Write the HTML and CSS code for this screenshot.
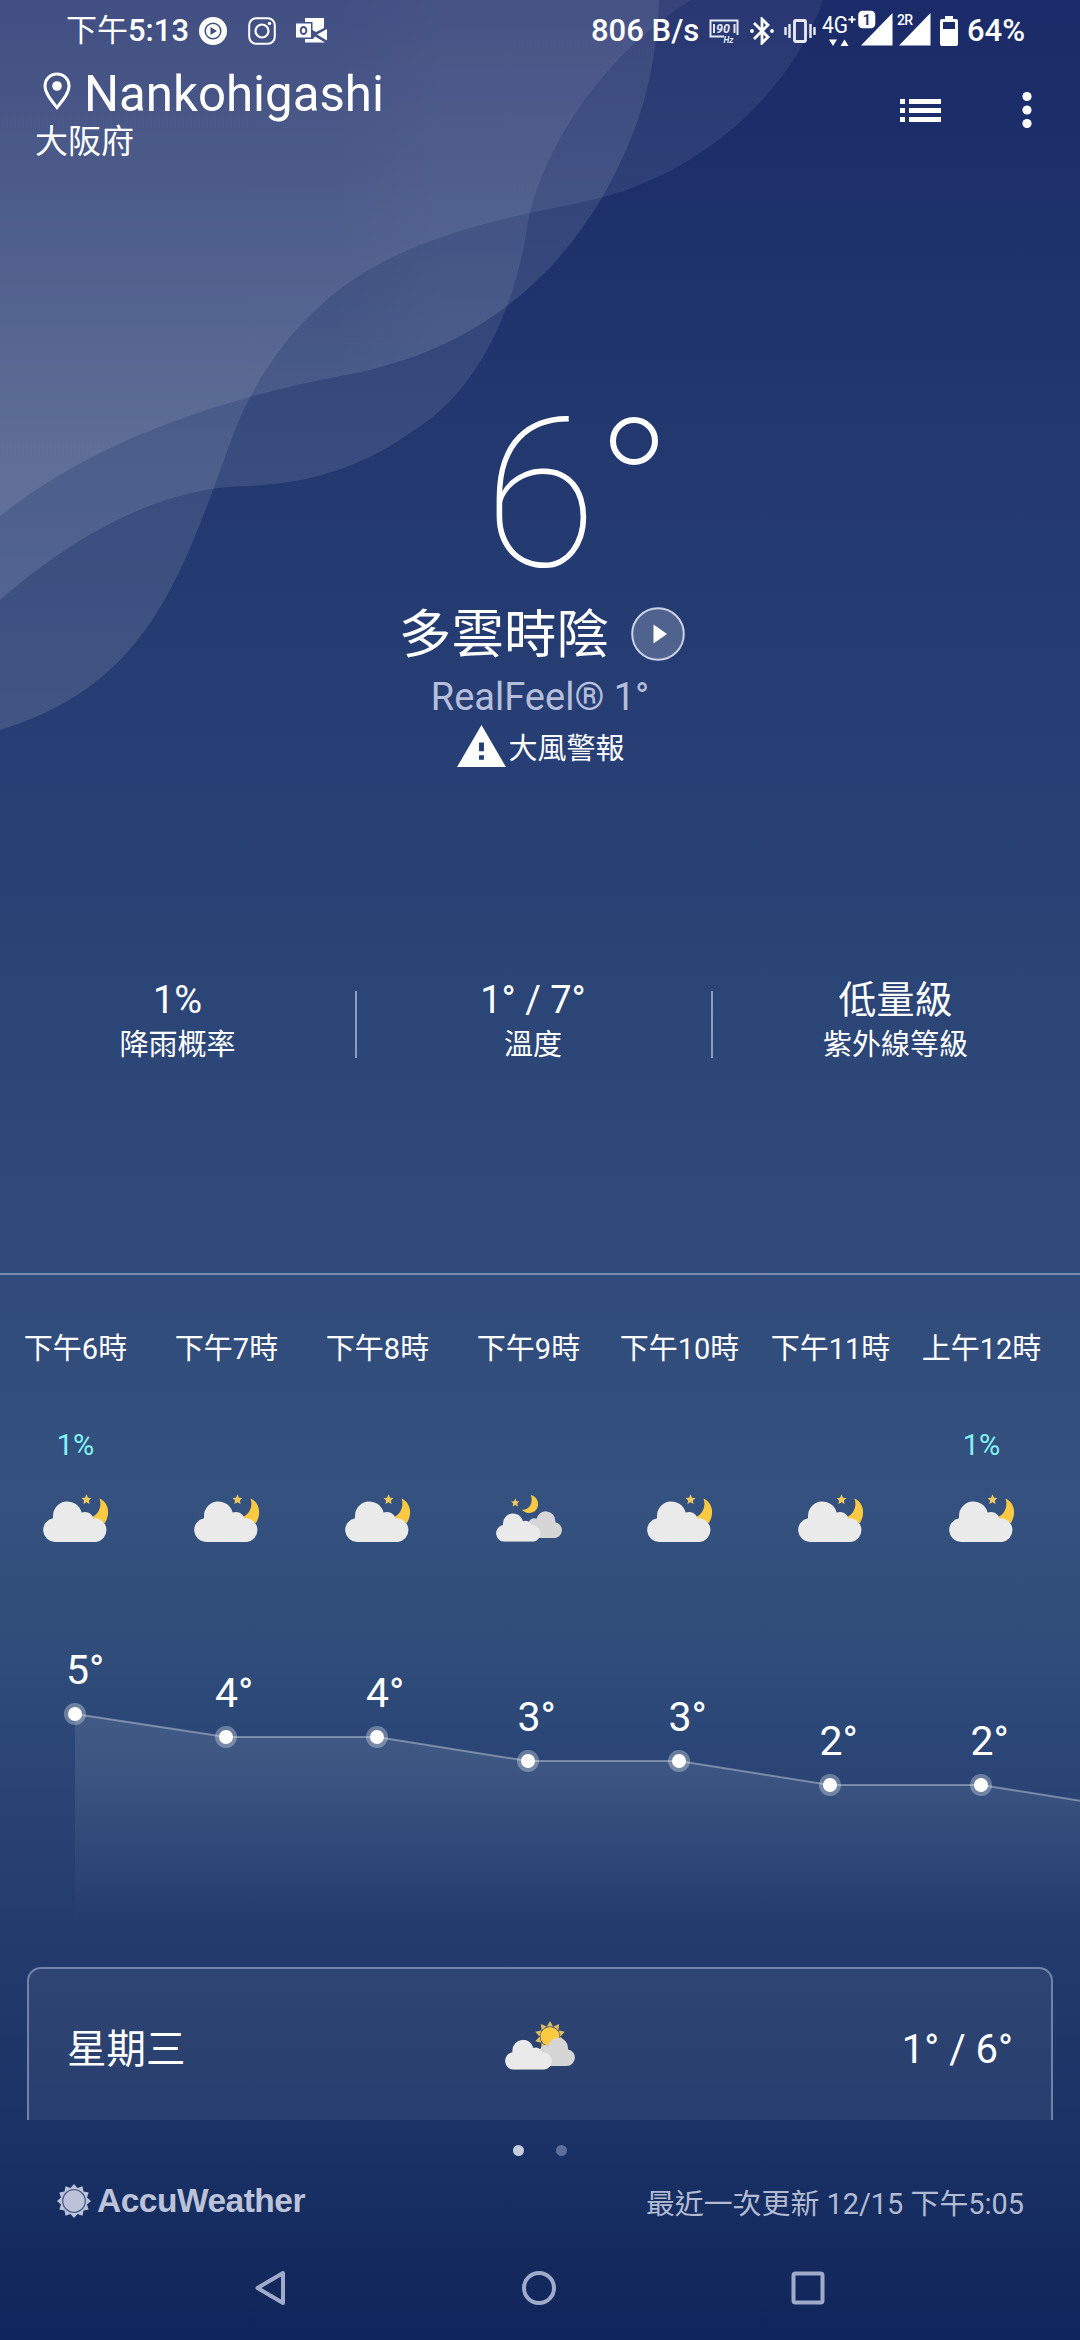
FILE: index.html
```html
<!DOCTYPE html>
<html lang="zh-Hant">
<head>
<meta charset="utf-8">
<title>AccuWeather</title>
<link rel="stylesheet" href="styles.css">
</head>
<body>
<svg class="defs" width="0" height="0" aria-hidden="true">
  <defs>
    <linearGradient id="veil" gradientUnits="userSpaceOnUse" x1="0" y1="0" x2="0" y2="720">
      <stop offset="0" stop-color="#fff" stop-opacity=".06"/>
      <stop offset=".6" stop-color="#fff" stop-opacity=".098"/>
      <stop offset="1" stop-color="#fff" stop-opacity=".12"/>
    </linearGradient>
    <linearGradient id="sheen" gradientUnits="userSpaceOnUse" x1="330" y1="0" x2="440" y2="0">
      <stop offset="0" stop-color="#fff" stop-opacity="0"/>
      <stop offset="1" stop-color="#fff" stop-opacity=".025"/>
    </linearGradient>
    <linearGradient id="area" x1="0" y1="0" x2="0" y2="1">
      <stop offset="0" stop-color="#fff" stop-opacity=".1"/>
      <stop offset=".25" stop-color="#fff" stop-opacity=".09"/>
      <stop offset="1" stop-color="#fff" stop-opacity="0"/>
    </linearGradient>
    <symbol id="cloud" viewBox="0 0 65 41">
      <path d="M12 41A12 12 0 0 1 10 17.2V15A14.5 14.5 0 0 1 38.6 11.6A9 9 0 0 1 50.5 17.2H53A12 12 0 0 1 53 41Z"/>
    </symbol>
    <symbol id="star" viewBox="0 0 10 10">
      <path d="M5 0L6.5 3.4L10 3.8L7.4 6.2L8.1 9.8L5 8L1.900 9.800L2.600 6.200L0 3.800L3.500 3.400Z"/>
    </symbol>
    <symbol id="cloudy-night" viewBox="0 0 80 60">
      <path class="gold" d="M63.5 8.500C72 12 75 23 69 33L55 27.500C62 25 66.500 17 63.500 8.500Z"/>
      <use class="gold-soft" href="#star" x="45.500" y="4" width="10" height="10.500"/>
      <use class="cloud-light" href="#cloud" x="7" y="11" width="65" height="41"/>
    </symbol>
    <symbol id="partly-night" viewBox="0 0 80 60">
      <path class="gold" d="M41.800 5C52 7.500 51.500 23 40 23Q35.500 22.800 33 19.800C41 20 44.500 12 41.800 5Z"/>
      <use class="gold-soft" href="#star" x="22" y="8" width="8.500" height="9"/>
      <use class="cloud-dark" href="#cloud" x="-73" y="21" width="43" height="27.100" transform="scale(-1 1)"/>
      <use class="cloud-light" href="#cloud" x="7" y="23" width="45.500" height="28.800"/>
    </symbol>
  </defs>
</svg>

<main class="screen">
  <svg class="waves" viewBox="0 0 1080 760" aria-hidden="true">
    <path fill="url(#veil)" d="M0 0H823C790 95 700 172 600 198C545 211 500 217 448 235C360 263 300 310 255 388C232 430 228 452 213 490C170 605 130 690 0 730Z"/>
    <path id="wave-mid" fill="url(#veil)" d="M0 0H659C656 75 640 130 603 196C545 295 460 352 351 374C210 400 90 445 0 516Z"/>
    <path fill="url(#veil)" d="M0 0H691C610 50 545 140 528 222C512 330 465 400 413 431C365 465 315 483 248 486C160 487 75 535 0 600Z"/>
    <path fill="url(#sheen)" d="M0 0H659C656 75 640 130 603 196C545 295 460 352 351 374C210 400 90 445 0 516Z"/>
  </svg>

  <header class="status">
    <span class="clock">下午<b>5:13</b></span>
    <svg class="status-media" viewBox="0 0 28 28"><circle cx="14" cy="14" r="14" fill="#fff"/><circle cx="14" cy="14" r="7.800" fill="none" stroke="#42517f" stroke-width="1.500"/><path d="M11.500 10L18 14L11.500 18Z" fill="#42517f"/></svg>
    <svg class="status-insta" viewBox="0 0 28 28" fill="none" stroke="#fff"><rect x="1.200" y="1.200" width="25.600" height="25.600" rx="7" stroke-width="2"/><circle cx="14" cy="14" r="6.500" stroke-width="2.200"/><circle cx="21.500" cy="6.500" r="1.700" fill="#fff" stroke="none"/></svg>
    <svg class="status-mail" viewBox="0 0 32 25" fill="#fff"><path fill-rule="evenodd" d="M0 5.500H15V19.500H0ZM7.500 8A3.800 4.500 0 1 0 7.500 17A3.800 4.500 0 1 0 7.500 8ZM7.500 10A1.900 2.500 0 1 1 7.500 15A1.900 2.500 0 1 1 7.500 10Z"/><path d="M9 0H28V10L20 14L16.500 12V4H9ZM31 11V22.500L21 16.500ZM9 21H17L19 18.500L29 24.500H9Z"/></svg>
    <span class="speed">806 B/s</span>
    <svg class="status-hz" viewBox="0 0 30 24"><path d="M15 17.500H1.500V1.500H28.500V16" fill="none" stroke="#e3e7f4" stroke-width="2"/><path d="M5 5V14M25.500 5V14" stroke="#e3e7f4" stroke-width="2"/><text x="7" y="14" font-size="12.500" font-style="italic" font-weight="700" fill="#e3e7f4">90</text><text x="14.500" y="23.500" font-size="8.500" font-style="italic" font-weight="700" fill="#e3e7f4">Hz</text></svg>
    <svg class="status-bt" viewBox="0 0 24 28"><path d="M4 6L18 20L12 26V2L18 8L4 22" fill="none" stroke="#fff" stroke-width="2.800"/><circle cx="2" cy="14" r="1.900" fill="#fff"/><circle cx="22" cy="14" r="1.900" fill="#fff"/></svg>
    <svg class="status-vibrate" viewBox="0 0 32 24"><rect x="10.500" y="1.500" width="11" height="21" rx="1" fill="none" stroke="#e8ebf6" stroke-width="2.800"/><path d="M1.500 8V16M5.500 5V19M26.500 5V19M30.500 8V16" stroke="#e8ebf6" stroke-width="2.400"/></svg>
    <svg class="status-signal" viewBox="0 0 112 38" fill="#fff">
      <text x="0" y="22.500" font-size="23" font-weight="400" textLength="26" lengthAdjust="spacingAndGlyphs">4G</text><path d="M30 6V13M26.500 9.500H33.500" stroke="#fff" stroke-width="1.800"/>
      <path d="M7 29.500H15L11 36ZM18.500 36L22.500 29.500L26.500 36Z"/>
      <path d="M39 35.500L70.500 3V35.500ZM77 35.500L108.500 3V35.500Z"/>
      <rect x="35.500" y="0" width="18.500" height="19" rx="5" stroke="#1c2e69" stroke-width="1.500"/>
      <text x="40.700" y="14.500" font-size="14" font-weight="700" fill="#1c2e69">1</text>
      <text x="75" y="14.500" font-size="14" font-weight="500" textLength="16">2R</text>
    </svg>
    <svg class="status-battery" viewBox="0 0 18 30"><path fill="#fff" fill-rule="evenodd" d="M5 0H13V3H16A2 2 0 0 1 18 5V28A2 2 0 0 1 16 30H2A2 2 0 0 1 0 28V5A2 2 0 0 1 2 3H5ZM3 6V13H15V6Z"/></svg>
    <span class="percent">64%</span>
  </header>

  <section class="location">
    <div class="place">
      <div class="city">
        <svg class="pin" viewBox="0 0 28 38"><path d="M14 2C7 2 2 7.300 2 14C2 21 8 28 14 35.500C20 28 26 21 26 14C26 7.300 21 2 14 2Z" fill="none" stroke="#fff" stroke-width="3"/><circle cx="14" cy="14" r="4.800" fill="#fff"/></svg>
        <h1>Nankohigashi</h1>
      </div>
      <p class="region">大阪府</p>
    </div>
    <svg class="icon-list" viewBox="0 0 41 23" fill="#fff"><path d="M0 0H5V5H0ZM9 0H41V5H9ZM0 9H5V14H0ZM9 9H41V14H9ZM0 18H5V23H0ZM9 18H41V23H9Z"/></svg>
    <svg class="icon-more" viewBox="0 0 10 36" fill="#fff"><circle cx="5" cy="4.500" r="4.600"/><circle cx="5" cy="18" r="4.600"/><circle cx="5" cy="31.500" r="4.600"/></svg>
  </section>

  <section class="now">
    <div class="temp">6<span class="degree"></span></div>
    <div class="condition"><span>多雲時陰</span>
      <svg class="play" viewBox="0 0 54 54"><circle cx="27" cy="27" r="25.800" fill="#fff" fill-opacity=".2" stroke="#ccd1e6" stroke-width="2"/><path d="M22.500 17.500V36.500L36 27Z" fill="#fff"/></svg>
    </div>
    <p class="realfeel">RealFeel® 1°</p>
    <div class="alert">
      <svg class="warning" viewBox="0 0 50 43"><path d="M25 0L50 43H0Z" fill="#fff"/><path d="M22.500 18H27.500V27H22.500ZM22.500 31H27.500V35.500H22.500Z" fill="#263e73"/></svg>
      <span>大風警報</span>
    </div>
  </section>

  <section class="stats">
    <div class="stat"><span class="value">1%</span><span class="label">降雨概率</span></div>
    <div class="stat"><span class="value">1° / 7°</span><span class="label">溫度</span></div>
    <div class="stat"><span class="value">低量級</span><span class="label">紫外線等級</span></div>
  </section>

  <section class="hourly">
    <div class="hours">
      <div class="hour"><span>下午6時</span><span class="rain">1%</span><svg><use href="#cloudy-night"/></svg></div>
      <div class="hour"><span>下午7時</span><span class="rain"></span><svg><use href="#cloudy-night"/></svg></div>
      <div class="hour"><span>下午8時</span><span class="rain"></span><svg><use href="#cloudy-night"/></svg></div>
      <div class="hour"><span>下午9時</span><span class="rain"></span><svg><use href="#partly-night"/></svg></div>
      <div class="hour"><span>下午10時</span><span class="rain"></span><svg><use href="#cloudy-night"/></svg></div>
      <div class="hour"><span>下午11時</span><span class="rain"></span><svg><use href="#cloudy-night"/></svg></div>
      <div class="hour"><span>上午12時</span><span class="rain">1%</span><svg><use href="#cloudy-night"/></svg></div>
    </div>
    <svg class="chart" viewBox="0 1550 1080 417">
      <path fill="url(#area)" d="M75 1714L226 1737H377L528 1761H679L830 1785H981L1132 1809V1925H75Z"/>
      <path fill="none" stroke="#fff" stroke-opacity=".35" stroke-width="2" d="M75 1714L226 1737H377L528 1761H679L830 1785H981L1132 1809"/>
      <g class="halo"><circle cx="75" cy="1714" r="11"/><circle cx="226" cy="1737" r="11"/><circle cx="377" cy="1737" r="11"/><circle cx="528" cy="1761" r="11"/><circle cx="679" cy="1761" r="11"/><circle cx="830" cy="1785" r="11"/><circle cx="981" cy="1785" r="11"/></g>
      <g class="point"><circle cx="75" cy="1714" r="7"/><circle cx="226" cy="1737" r="7"/><circle cx="377" cy="1737" r="7"/><circle cx="528" cy="1761" r="7"/><circle cx="679" cy="1761" r="7"/><circle cx="830" cy="1785" r="7"/><circle cx="981" cy="1785" r="7"/></g>
      <g class="chart-label"><text x="66" y="1684">5°</text><text x="215" y="1707">4°</text><text x="366" y="1707">4°</text><text x="517.500" y="1731">3°</text><text x="668.500" y="1731">3°</text><text x="819.500" y="1755">2°</text><text x="970.500" y="1755">2°</text></g>
    </svg>
  </section>

  <section class="day">
    <span class="weekday">星期三</span>
    <svg class="day-icon" viewBox="0 0 72 50">
      <g fill="#dcbc66"><path id="ray" d="M42.800 5.500L46 0L49.200 5.500Z"/><use href="#ray" transform="rotate(36 46 15.500)"/><use href="#ray" transform="rotate(72 46 15.500)"/><use href="#ray" transform="rotate(108 46 15.500)"/><use href="#ray" transform="rotate(144 46 15.500)"/><use href="#ray" transform="rotate(180 46 15.500)"/><use href="#ray" transform="rotate(216 46 15.500)"/><use href="#ray" transform="rotate(252 46 15.500)"/><use href="#ray" transform="rotate(288 46 15.500)"/><use href="#ray" transform="rotate(324 46 15.500)"/></g>
      <circle cx="46" cy="15.500" r="9.600" fill="#fcc941"/>
      <use class="cloud-dark" href="#cloud" x="-71" y="16.500" width="45" height="28.400" transform="scale(-1 1)"/>
      <use class="cloud-light" href="#cloud" x="1" y="18.500" width="48" height="30.300"/>
    </svg>
    <span class="range">1° / 6°</span>
  </section>

  <div class="pager"><i class="on"></i><i></i></div>

  <footer class="credits">
    <svg class="sun" viewBox="-17 -17 34 34"><path fill="#bcc3d8" d="M0-17L3.500-13L8.500-14.700L9.500-9.500L14.700-8.500L13-3.500L17 0L13 3.500L14.700 8.500L9.500 9.500L8.500 14.700L3.500 13L0 17L-3.500 13L-8.500 14.700L-9.500 9.500L-14.700 8.500L-13 3.500L-17 0L-13-3.500L-14.700-8.500L-9.500-9.500L-8.500-14.700L-3.500-13Z"/><circle r="11.300" fill="none" stroke="#4a5c8c" stroke-width="1.300"/></svg>
    <span class="brand">AccuWeather</span>
    <span class="updated">最近一次更新 12/15 下午5:05</span>
  </footer>

  <nav class="nav">
    <svg viewBox="0 0 34 38"><path d="M30 4V34L4.500 19Z" fill="none" stroke="#9fabc9" stroke-width="4" stroke-linejoin="round"/></svg>
    <svg viewBox="0 0 34 38"><circle cx="17" cy="19" r="15" fill="none" stroke="#9fabc9" stroke-width="4"/></svg>
    <svg viewBox="0 0 34 38"><rect x="2.500" y="4.500" width="29" height="29" rx="2" fill="none" stroke="#9fabc9" stroke-width="4"/></svg>
  </nav>
</main>
</body>
</html>
```
FILE: styles.css
```css
* { box-sizing: border-box; }
body {
  margin: 0;
  color: #fff;
  font-family: Roboto, "Noto Sans CJK TC", sans-serif;
}
h1, p { margin: 0; font-weight: 400; }
svg { display: block; flex: none; }
.defs { position: absolute; }

.screen {
  position: relative;
  display: flex;
  flex-direction: column;
  width: 1080px;
  height: 2340px;
  overflow: hidden;
  background: linear-gradient(180deg,
    #1b2b69 0, #1d316b 230px, #22386f 430px, #273f74 760px, #2b4576 1000px,
    #304b7a 1260px, #34517f 1500px, #314e7b 1620px, #294475 1780px,
    #223b6c 1950px, #1b3366 2120px, #10255b 2340px);
}
.waves { position: absolute; top: 0; left: 0; width: 1080px; height: 760px; }
.screen > :not(.waves) { position: relative; flex: none; }

/* Status bar */
.status {
  display: flex;
  align-items: center;
  height: 62px;
  padding: 0 50px 0 66px;
  font-size: 31px;
  font-weight: 500;
  line-height: 62px;
  white-space: nowrap;
}
.clock { flex: none; width: 133px; font-weight: 400; }
.clock b { font-weight: 500; }
.status-media { width: 28px; height: 28px; margin-right: 21px; }
.status-insta { width: 28px; height: 28px; margin-right: 20px; }
.status-mail { width: 32px; height: 25px; margin-bottom: 2px; }
.speed { flex: none; width: 118px; margin-left: 263px; }
.status-hz { width: 30px; height: 24px; margin-right: 11px; }
.status-bt { width: 24px; height: 28px; margin-right: 10px; }
.status-vibrate { width: 32px; height: 24px; margin-right: 6px; }
.status-signal { width: 112px; height: 38px; margin: 0 6px 5px 0; }
.status-battery { width: 18px; height: 30px; margin-right: 9px; }

/* Location header */
.location {
  display: flex;
  align-items: flex-start;
  height: 108px;
  padding: 4px 48px 0 35px;
}
.place { flex: 1; }
.city { display: flex; align-items: flex-start; height: 57px; gap: 13px; padding-left: 8px; }
.pin { width: 28px; height: 38px; margin-top: 6px; }
.city h1 { font-size: 49.200px; line-height: 57px; }
.region { font-size: 33px; line-height: 38px; }
.icon-list { width: 41px; height: 23px; margin: 33px 81px 0 0; }
.icon-more { width: 10px; height: 36px; margin-top: 26px; }

/* Current conditions */
.now { display: flex; flex-direction: column; align-items: center; height: 807px; padding-top: 226px; }
.temp {
  display: flex;
  align-items: flex-start;
  height: 200px;
  padding-left: 62px;
  font-size: 207px;
  font-weight: 100;
  line-height: 200px;
}
.degree { width: 48px; height: 48px; margin: 21px 0 0 13px; border: 6px solid #fff; border-radius: 50%; }
.condition { display: flex; align-items: center; gap: 22px; height: 78px; padding-left: 4px; font-size: 52.500px; line-height: 78px; }
.play { width: 54px; height: 54px; margin-bottom: 3px; }
.realfeel { font-size: 38px; line-height: 46px; color: #b6bedb; }
.alert { display: flex; align-items: center; gap: 2px; height: 52px; padding-left: 2px; font-size: 29px; }
.warning { width: 49px; height: 42px; }

/* Day summary */
.stats { display: grid; grid-template-columns: 355px 356px 369px; height: 298px; border-bottom: 2px solid #7a8db1; }
.stat { display: flex; flex-direction: column; align-items: center; height: 90px; }
.stat + .stat { background: linear-gradient(#8f9dbd, #8f9dbd) 0 14px / 2px 67px no-repeat; }
.value { font-size: 38px; line-height: 46px; }
.label { font-size: 29px; line-height: 44px; }

/* Hourly forecast */
.hourly { height: 692px; padding-top: 54px; }
.hours { display: grid; grid-template-columns: repeat(7, 151px); }
.hour { display: flex; flex-direction: column; align-items: center; height: 221px; font-size: 29px; line-height: 40px; white-space: nowrap; }
.rain { flex: none; height: 40px; margin: 56px 0 25px; color: #83f3f5; }
.hour svg { width: 80px; height: 60px; }
.gold { fill: #fcca42; }
.gold-soft { fill: #efc95f; }
.cloud-light { fill: #eaeaea; }
.cloud-dark { fill: #d6d6d6; }
.chart { width: 1080px; height: 417px; }
.halo { fill: #fff; fill-opacity: .3; }
.point { fill: #fff; }
.chart-label { fill: #fff; font-size: 41px; }

/* Daily forecast card */
.day {
  display: grid;
  grid-template-columns: 1fr 72px 1fr;
  align-items: center;
  height: 153px;
  margin: 0 27px;
  padding: 10px 38px 0;
  border: 2px solid #7183a8;
  border-bottom: 0;
  border-radius: 14px 14px 0 0;
  background: rgba(255, 255, 255, .06);
}
.weekday { margin-bottom: 9px; font-size: 39.500px; }
.day-icon { width: 72px; height: 50px; margin-bottom: 7px; }
.range { font-size: 40px; text-align: right; }
.pager { display: flex; justify-content: center; align-items: center; gap: 32px; height: 61px; }
.pager i { width: 11px; height: 11px; border-radius: 50%; background: #5d6f99; }
.pager .on { background: #c5ccdd; }

/* Attribution */
.credits { display: flex; align-items: center; height: 46px; padding: 0 56px 0 57px; }
.sun { width: 34px; height: 34px; margin: 0 6px 6px 0; }
.brand { font: 700 33.500px/46px "Liberation Sans", Arial, sans-serif; letter-spacing: -.5px; color: #bcc3d8; margin-bottom: 6px; }
.updated { margin-left: auto; font-size: 28.900px; line-height: 46px; color: #b3bbd2; }

/* System navigation */
.nav { display: flex; justify-content: center; gap: 235px; height: 113px; padding: 42px 3px 0 0; }
.nav svg { width: 34px; height: 38px; }
```
